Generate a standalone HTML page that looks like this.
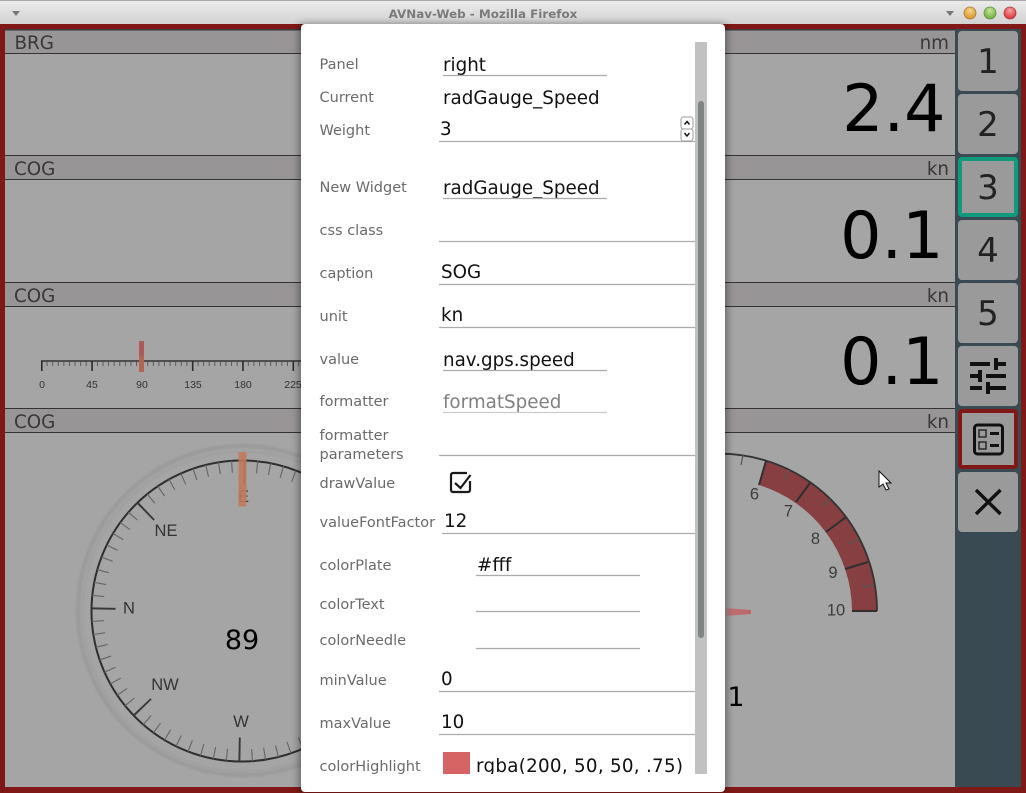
<!DOCTYPE html>
<html><head><meta charset="utf-8"><title>AVNav-Web</title>
<style>
html,body{margin:0;padding:0;background:#fff;overflow:hidden}
svg{display:block}
text{font-family:"DejaVu Sans",sans-serif}
.l{font-size:14.5px;fill:#6a6a6a}
.v{font-size:18.3px;fill:#111}
.h{font-size:18.3px;fill:#383838}
.b{font-size:34px;fill:#222;text-anchor:middle}
.big{font-size:65px;fill:#000;text-anchor:end}
.u{stroke:#ababab;stroke-width:1.2}
.c{font-family:"Liberation Sans",sans-serif;font-size:16.5px;fill:#333;text-anchor:middle}
.g{font-family:"Liberation Sans",sans-serif;font-size:16.5px;fill:#3c3c3c;text-anchor:middle}
.t{font-family:"Liberation Sans",sans-serif;font-size:10.5px;fill:#333;text-anchor:middle}
</style></head><body>
<svg width="1026" height="793" viewBox="0 0 1026 793" xmlns="http://www.w3.org/2000/svg">
<defs>
<linearGradient id="tb" x1="0" y1="0" x2="0" y2="1"><stop offset="0" stop-color="#ececec"/><stop offset="1" stop-color="#d2d2d2"/></linearGradient>
<radialGradient id="o" cx=".5" cy=".3" r=".7"><stop offset="0" stop-color="#f6d68a"/><stop offset="1" stop-color="#d8932a"/></radialGradient>
<radialGradient id="gr" cx=".5" cy=".3" r=".7"><stop offset="0" stop-color="#c4e59a"/><stop offset="1" stop-color="#6eab3e"/></radialGradient>
<radialGradient id="r" cx=".5" cy=".3" r=".7"><stop offset="0" stop-color="#f7a0a0"/><stop offset="1" stop-color="#d92f35"/></radialGradient>
<linearGradient id="nd" x1="0" y1="0" x2="1" y2="0"><stop offset="0" stop-color="#a5a5a5"/><stop offset=".2" stop-color="#c07072"/><stop offset="1" stop-color="#bd6668"/></linearGradient>
<filter id="sh" x="-10%" y="-10%" width="120%" height="120%"><feGaussianBlur stdDeviation="4"/></filter>
<filter id="bl" x="-50%" y="-50%" width="200%" height="200%"><feGaussianBlur stdDeviation=".8"/></filter>
<clipPath id="hl"><rect x="430" y="740" width="265" height="34"/></clipPath>
</defs>

<!-- window chrome -->
<rect x="0" y="0" width="1026" height="24" fill="url(#tb)"/>
<rect x="0" y="0" width="1026" height="1" fill="#a8a8a8"/>
<polygon points="12,11 20,11 16,16" fill="#777"/>
<polygon points="946,11 954,11 950,16" fill="#777"/>
<text x="483" y="18" font-size="11.9" font-weight="bold" fill="#7a7a7a" text-anchor="middle">AVNav-Web - Mozilla Firefox</text>
<circle cx="970" cy="13" r="6" fill="url(#o)" stroke="#a87a30" stroke-width=".8"/>
<circle cx="990" cy="13" r="6" fill="url(#gr)" stroke="#5f8c3c" stroke-width=".8"/>
<circle cx="1010" cy="13" r="6" fill="url(#r)" stroke="#aa3a3a" stroke-width=".8"/>

<!-- app frame -->
<rect x="0" y="24" width="1026" height="769" fill="#801818"/>
<rect x="5" y="29" width="950" height="758" fill="#a5a5a5"/>
<rect x="955" y="29" width="66" height="758" fill="#3a4a52"/>

<!-- widget headers -->
<rect x="5" y="29" width="950" height="1.5" fill="#3a3a3a"/>
<rect x="5" y="30.5" width="950" height="22.5" fill="#989596"/>
<rect x="5" y="53" width="950" height="1" fill="#333"/>
<rect x="5" y="155" width="950" height="1" fill="#333"/>
<rect x="5" y="156" width="950" height="23" fill="#989596"/>
<rect x="5" y="179" width="950" height="1" fill="#333"/>
<rect x="5" y="282" width="950" height="1" fill="#333"/>
<rect x="5" y="283" width="950" height="23" fill="#989596"/>
<rect x="5" y="306" width="950" height="1" fill="#333"/>
<rect x="5" y="408" width="950" height="1" fill="#333"/>
<rect x="5" y="409" width="950" height="23" fill="#989596"/>
<rect x="5" y="432" width="950" height="1" fill="#333"/>

<text class="h" x="14.5" y="49">BRG</text>
<text class="h" x="14" y="175">COG</text>
<text class="h" x="14" y="302">COG</text>
<text class="h" x="14" y="428">COG</text>
<text class="h" x="949" y="49" text-anchor="end">nm</text>
<text class="h" x="949" y="175" text-anchor="end">kn</text>
<text class="h" x="949" y="302" text-anchor="end">kn</text>
<text class="h" x="949" y="428" text-anchor="end">kn</text>

<text class="big" x="945.5" y="131">2.4</text>
<text class="big" x="943.5" y="258">0.1</text>
<text class="big" x="943.5" y="384">0.1</text>

<!-- linear compass -->
<line x1="41" y1="361" x2="310" y2="361" stroke="#333" stroke-width="1.6"/>
<line x1="41" y1="363.5" x2="310" y2="363.5" stroke="#444" stroke-width="5" stroke-dasharray="1 4.59" opacity=".75"/>
<line x1="41" y1="366" x2="310" y2="366" stroke="#2c2c2c" stroke-width="10" stroke-dasharray="1.6 48.7"/>
<text class="t" x="42" y="388">0</text>
<text class="t" x="92" y="388">45</text>
<text class="t" x="142" y="388">90</text>
<text class="t" x="193" y="388">135</text>
<text class="t" x="243" y="388">180</text>
<text class="t" x="293" y="388">225</text>
<rect x="139" y="341" width="5" height="31" fill="#ad5a5c"/>
<rect x="139" y="356" width="5" height="16" fill="#b56a50" opacity=".7"/>

<!-- radial compass -->
<circle cx="242.5" cy="610.5" r="164.5" fill="none" stroke="#9b9b9b" stroke-width="4.5" filter="url(#bl)"/>
<circle cx="242.5" cy="611.5" r="160" fill="none" stroke="#a0a0a0" stroke-width="3" filter="url(#bl)"/>
<circle cx="242" cy="611" r="150.5" fill="none" stroke="#2e2e2e" stroke-width="2"/>
<g transform="rotate(1 242 611)">
<circle cx="242" cy="611" r="144.5" fill="none" stroke="#666" stroke-width="12" pathLength="360" stroke-dasharray=".45 4.55" stroke-dashoffset=".22"/>
<circle cx="242" cy="611" r="138.5" fill="none" stroke="#383838" stroke-width="24" pathLength="360" stroke-dasharray=".8 44.2" stroke-dashoffset=".4"/>
</g>
<text class="c" x="243.5" y="502">E</text>
<text class="c" x="129" y="613.5">N</text>
<text class="c" x="166" y="536">NE</text>
<text class="c" x="165" y="690">NW</text>
<text class="c" x="241" y="727">W</text>
<rect x="238.5" y="452" width="8" height="54.5" fill="#c07a5a" opacity=".9"/>
<text x="242" y="649" font-size="27" fill="#000" text-anchor="middle">89</text>

<!-- radial gauge -->
<path d="M766 461 A157 157 0 0 1 877 611 L852 611 A132 132 0 0 0 759 485 Z" fill="#883f42"/>
<path d="M700 455 A157 157 0 0 1 877 611" fill="none" stroke="#333" stroke-width="1.8"/>
<g stroke="#2f2f2f" stroke-width="2">
<line x1="766" y1="461" x2="759" y2="485"/>
<line x1="810" y1="483" x2="796" y2="502"/>
<line x1="846" y1="517" x2="826" y2="532"/>
<line x1="868" y1="562" x2="845" y2="569"/>
<line x1="877" y1="611" x2="852" y2="611"/>
</g>
<g stroke="#555" stroke-width="1.2">
<line x1="743" y1="455" x2="741" y2="465"/>
<line x1="789" y1="470" x2="784" y2="480"/>
<line x1="830" y1="499" x2="822" y2="506"/>
<line x1="859" y1="539" x2="848" y2="544"/>
<line x1="874" y1="585" x2="862" y2="587"/>
</g>
<text class="g" x="754.5" y="499.5">6</text>
<text class="g" x="788.5" y="516.5">7</text>
<text class="g" x="815.5" y="544">8</text>
<text class="g" x="833" y="578">9</text>
<text class="g" x="836" y="615.5">10</text>
<polygon points="725,608 751,610 751,614 725,616" fill="url(#nd)"/>
<text x="736" y="706" font-size="27" fill="#000" text-anchor="middle">1</text>

<!-- sidebar buttons -->
<g fill="#9a9a9a">
<rect x="958" y="31" width="60" height="60" rx="4"/>
<rect x="958" y="94" width="60" height="60" rx="4"/>
<rect x="960" y="159" width="56" height="56" rx="2" stroke="#0f9a7c" stroke-width="4"/>
<rect x="958" y="220" width="60" height="60" rx="4"/>
<rect x="958" y="283" width="60" height="60" rx="4"/>
<rect x="958" y="346" width="60" height="60" rx="4"/>
<rect x="960" y="411" width="56" height="56" rx="2" stroke="#801818" stroke-width="4"/>
<rect x="958" y="472" width="60" height="60" rx="4"/>
</g>
<text class="b" x="988" y="73">1</text>
<text class="b" x="988" y="136">2</text>
<text class="b" x="988" y="199">3</text>
<text class="b" x="988" y="262">4</text>
<text class="b" x="988" y="325">5</text>
<path transform="translate(964 352) scale(2)" fill="#111" d="M3 17v2h6v-2H3zM3 5v2h10V5H3zm10 16v-2h8v-2h-8v-2h-2v6h2zM7 9v2H3v2h4v2h2V9H7zm14 4v-2H11v2h10zm-6-4h2V7h4V5h-4V3h-2v6z"/>
<rect x="974.5" y="425" width="28" height="29" rx="3" fill="none" stroke="#111" stroke-width="3"/>
<rect x="979" y="430" width="7" height="7" fill="none" stroke="#222" stroke-width="1.4"/>
<rect x="979" y="442" width="7" height="7" fill="none" stroke="#222" stroke-width="1.4"/>
<rect x="990" y="432" width="9" height="3" fill="#111"/>
<rect x="990" y="444" width="9" height="3" fill="#111"/>
<path d="M976 490 L1000.5 514 M1000.5 490 L976 514" stroke="#111" stroke-width="3.4" fill="none"/>

<!-- cursor -->
<polygon points="879,471 879,487 883,484 886,490 889,489 886,483 891,483" fill="#fff" stroke="#111" stroke-width="1"/>

<!-- modal -->
<rect x="299" y="24" width="428" height="768" rx="4" fill="#000" opacity=".4" filter="url(#sh)"/>
<rect x="301" y="24" width="424" height="768" rx="4" fill="#fff"/>

<!-- scrollbar -->
<rect x="695" y="42" width="12" height="732" fill="#c0c1c0"/>
<rect x="698" y="101" width="6" height="537" rx="3" fill="#808585"/>

<text class="l" x="319.5" y="69">Panel</text>
<text class="v" x="443" y="71">right</text>
<line class="u" x1="443" x2="607" y1="75.5" y2="75.5"/>

<text class="l" x="319.5" y="102">Current</text>
<text class="v" x="443" y="104">radGauge_Speed</text>

<text class="l" x="319.5" y="135">Weight</text>
<text class="v" x="440" y="135">3</text>
<line class="u" x1="439" x2="695" y1="141.5" y2="141.5"/>
<rect x="681" y="117" width="12" height="12" rx="2.5" fill="#fff" stroke="#999" stroke-width="1"/>
<rect x="681" y="129" width="12" height="12" rx="2.5" fill="#fff" stroke="#999" stroke-width="1"/>
<path d="M684.5 124.5 L687 121.5 L689.5 124.5 M684.5 133 L687 136 L689.5 133" fill="none" stroke="#111" stroke-width="1.4"/>

<text class="l" x="319.5" y="192">New Widget</text>
<text class="v" x="443" y="194">radGauge_Speed</text>
<line class="u" x1="443" x2="607" y1="198.5" y2="198.5"/>

<text class="l" x="319.5" y="235">css class</text>
<line class="u" x1="439" x2="695" y1="241.5" y2="241.5"/>

<text class="l" x="319.5" y="278">caption</text>
<text class="v" x="441" y="278">SOG</text>
<line class="u" x1="439" x2="695" y1="284.5" y2="284.5"/>

<text class="l" x="319.5" y="321">unit</text>
<text class="v" x="441" y="321">kn</text>
<line class="u" x1="439" x2="695" y1="327.5" y2="327.5"/>

<text class="l" x="319.5" y="364">value</text>
<text class="v" x="443" y="366">nav.gps.speed</text>
<line class="u" x1="443" x2="607" y1="370.5" y2="370.5"/>

<text class="l" x="319.5" y="406">formatter</text>
<text class="v" x="443" y="408" style="fill:#808080">formatSpeed</text>
<line class="u" x1="443" x2="607" y1="412.5" y2="412.5" style="stroke:#ccc"/>

<text class="l" x="319.5" y="440">formatter</text>
<text class="l" x="319.5" y="459">parameters</text>
<line class="u" x1="439" x2="695" y1="455.5" y2="455.5"/>

<text class="l" x="319.5" y="488">drawValue</text>
<path d="M470 481 V490 A2 2 0 0 1 468 492 H453 A2 2 0 0 1 451 490 V475 A2 2 0 0 1 453 473 H467" fill="none" stroke="#1a1a1a" stroke-width="2.2"/>
<path d="M455 483 L460.5 488 L470.5 475" fill="none" stroke="#1a1a1a" stroke-width="2.2"/>

<text class="l" x="319.5" y="527">valueFontFactor</text>
<text class="v" x="444" y="527">12</text>
<line class="u" x1="442" x2="695" y1="533.5" y2="533.5"/>

<text class="l" x="319.5" y="570">colorPlate</text>
<text class="v" x="477" y="571">#fff</text>
<line class="u" x1="476" x2="640" y1="575.5" y2="575.5"/>

<text class="l" x="319.5" y="609">colorText</text>
<line class="u" x1="476" x2="640" y1="611.5" y2="611.5"/>

<text class="l" x="319.5" y="645">colorNeedle</text>
<line class="u" x1="476" x2="640" y1="648.5" y2="648.5"/>

<text class="l" x="319.5" y="685">minValue</text>
<text class="v" x="441" y="685">0</text>
<line class="u" x1="439" x2="695" y1="691.5" y2="691.5"/>

<text class="l" x="319.5" y="728">maxValue</text>
<text class="v" x="441" y="728">10</text>
<line class="u" x1="439" x2="695" y1="734.5" y2="734.5"/>

<text class="l" x="319.5" y="771">colorHighlight</text>
<rect x="443" y="752" width="27" height="22" fill="#d66464"/>
<g clip-path="url(#hl)"><text class="v" x="476" y="772" textLength="207" lengthAdjust="spacing">rgba(200, 50, 50, .75)</text></g>
</svg>
</body></html>
